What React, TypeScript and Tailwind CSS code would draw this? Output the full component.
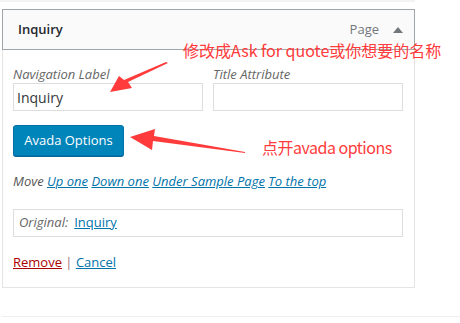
const FONT = { fontFamily: '"Open Sans", "Noto Sans", sans-serif' };
const CJK = { fontFamily: '"Noto Sans CJK SC", "Noto Sans", sans-serif' };

function Annotations() {
  return (
    <div className="pointer-events-none absolute inset-0">
      <svg className="absolute left-0 top-0" width="460" height="323" viewBox="0 0 460 323">
        {/* arrow toward navigation label input */}
        <polygon
          points="168,63 128,82 132,88 110,92 119,76 124,80 166,62"
          fill="#ff3b3b"
        />
        {/* arrow toward avada options button */}
        <polygon
          points="245,153 153,141 152,150 130,137 155,129 154,136 245,152"
          fill="#ff3b3b"
        />
      </svg>
      <div
        className="absolute left-[183px] top-[40px] whitespace-nowrap text-[16px] leading-[20px] text-[#ff3b3b]"
        style={CJK}
      >
        修改成Ask for quote或你想要的名称
      </div>
      <div
        className="absolute left-[262px] top-[137px] whitespace-nowrap text-[16px] leading-[20px] tracking-[-0.5px] text-[#ff3b3b]"
        style={CJK}
      >
        点开avada options
      </div>
    </div>
  );
}

export default function App() {
  return (
    <div className="relative h-[323px] w-[460px] overflow-hidden bg-white text-[13px] text-[#555]" style={FONT}>
      <div className="h-[2px] w-[415px] bg-[#f3f3f3]" />
      <div className="ml-[2px] mt-[7px] w-[413px]">
        <div className="flex h-[41px] items-center border border-[#a0a5aa] bg-[#fafafa] pl-[15px] pr-[11px]">
          <span className="font-semibold text-[#23282d]">Inquiry</span>
          <span className="ml-auto text-[#72777c]">Page</span>
          <svg className="ml-[14px]" width="10" height="6" viewBox="0 0 10 6">
            <polygon points="5,0 10,6 0,6" fill="#72777c" />
          </svg>
        </div>
        <div className="border-x border-b border-[#e5e5e5] pb-[16px] pl-[10px] pr-[11px] pt-[15px]">
          <div className="grid grid-cols-2 gap-[10px]">
            <div>
              <div className="text-[13px] italic leading-[18px] text-[#666]">Navigation Label</div>
              <div className="flex h-[28px] items-center border border-[#ddd] bg-white px-[3px] text-[14px] text-[#32373c]">
                Inquiry
              </div>
            </div>
            <div>
              <div className="text-[13px] italic leading-[18px] text-[#666]">Title Attribute</div>
              <div className="h-[28px] border border-[#ddd] bg-white" />
            </div>
          </div>
          <div className="mt-[14px] flex h-[31px] w-[111px] items-center justify-center rounded-[3px] border border-[#0073aa] bg-[#0085ba] text-[13px] text-white shadow-[0_1px_0_#006799]">
            Avada Options
          </div>
          <div className="mt-[16px] leading-[18px] italic text-[#555]">
            Move <span className="text-[#0073aa] underline">Up one</span>{" "}
            <span className="text-[#0073aa] underline">Down one</span>{" "}
            <span className="text-[#0073aa] underline">Under Sample Page</span>{" "}
            <span className="text-[#0073aa] underline">To the top</span>
          </div>
          <div className="mt-[19px] flex h-[28px] items-center border border-[#ddd] px-[5px]">
            <span className="italic text-[#666]">Original:</span>
            <span className="ml-[6px] text-[#0073aa] underline">Inquiry</span>
          </div>
          <div className="mt-[16px] leading-[18px]">
            <span className="text-[#a00] underline">Remove</span>
            <span className="text-[#a07070]"> | </span>
            <span className="text-[#0073aa] underline">Cancel</span>
          </div>
        </div>
      </div>
      <div className="ml-[2px] mt-[28px] h-px bg-[#eee]" />
      <Annotations />
    </div>
  );
}
